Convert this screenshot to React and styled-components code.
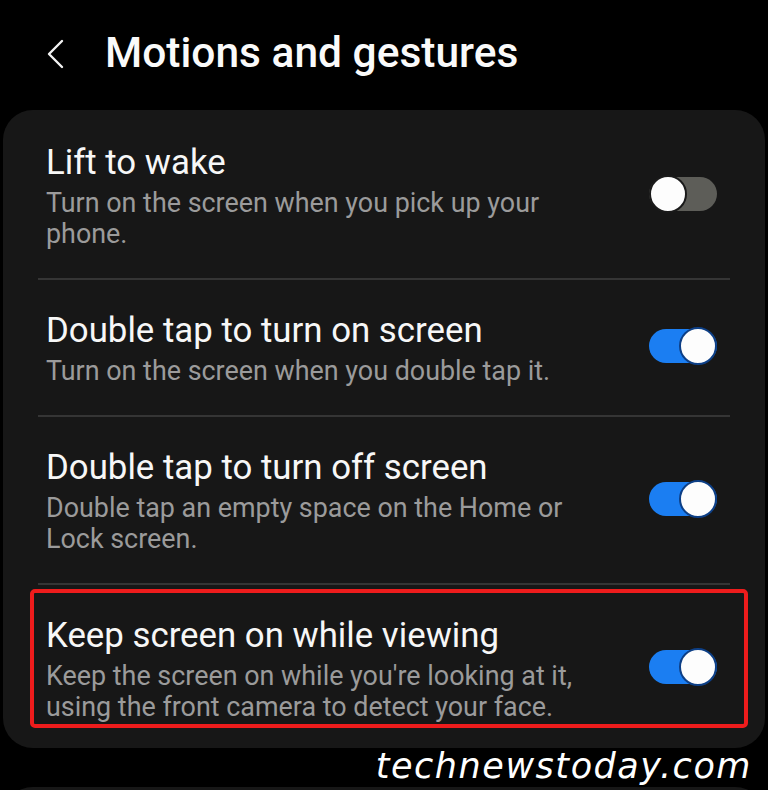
import React from "react";
import styled, { createGlobalStyle } from "styled-components";

const GlobalStyle = createGlobalStyle`
  html, body {
    margin: 0;
    padding: 0;
    background: #000;
  }
  * {
    box-sizing: border-box;
  }
`;

const settings = [
  {
    title: "Lift to wake",
    desc: ["Turn on the screen when you pick up your", "phone."],
    on: false,
  },
  {
    title: "Double tap to turn on screen",
    desc: ["Turn on the screen when you double tap it."],
    on: true,
  },
  {
    title: "Double tap to turn off screen",
    desc: ["Double tap an empty space on the Home or", "Lock screen."],
    on: true,
  },
  {
    title: "Keep screen on while viewing",
    desc: [
      "Keep the screen on while you're looking at it,",
      "using the front camera to detect your face.",
    ],
    on: true,
    highlight: true,
  },
];

const App = () => {
  return (
    <Screen>
      <GlobalStyle />
      <Header>
        <BackButton>
          <svg width="24" height="32" viewBox="0 0 24 32">
            <path
              d="M19 3 L6 16 L19 29"
              fill="none"
              stroke="#f2f2f2"
              strokeWidth="2.4"
              strokeLinecap="round"
              strokeLinejoin="round"
            />
          </svg>
        </BackButton>
        <Title>Motions and gestures</Title>
      </Header>

      <Card>
        {settings.map((s, i) => (
          <React.Fragment key={s.title}>
            {i > 0 && <Divider />}
            <Row last={i === settings.length - 1}>
              <Texts>
                <RowTitle>{s.title}</RowTitle>
                <RowDesc>
                  {s.desc.map((line) => (
                    <span key={line}>{line}</span>
                  ))}
                </RowDesc>
              </Texts>
              <Switch on={s.on}>
                <Thumb on={s.on} />
              </Switch>
              {s.highlight && <Highlight />}
            </Row>
          </React.Fragment>
        ))}
      </Card>

      <NextCard />
      <Watermark>technewstoday.com</Watermark>
    </Screen>
  );
};

export default App;

const Screen = styled.div`
  position: relative;
  width: 768px;
  height: 790px;
  overflow: hidden;
  background: #000;
  font-family: Roboto, "Noto Sans", sans-serif;
`;

const Header = styled.div`
  display: flex;
  align-items: flex-start;
  height: 110px;
  padding: 28px 0 0 43px;
`;

const BackButton = styled.div`
  width: 62px;
  padding-top: 10px;
  display: flex;
`;

const Title = styled.h1`
  margin: 0;
  font-size: 42.5px;
  line-height: 50px;
  font-weight: 500;
  color: #fafafa;
`;

const Card = styled.div`
  margin: 0 3px;
  padding: 2px 35px 0;
  background: #171717;
  border-radius: 30px;
`;

const Divider = styled.div`
  height: 2px;
  background: #353535;
`;

const Row = styled.div`
  position: relative;
  display: flex;
  align-items: center;
  justify-content: space-between;
  padding: ${({ last }) => (last ? "31px 13px 25px 8px" : "31px 13px 28px 8px")};
`;

const Texts = styled.div`
  display: flex;
  flex-direction: column;
  gap: 7px;
`;

const RowTitle = styled.div`
  font-size: 34.8px;
  line-height: 38px;
  color: #f7f7f7;
`;

const RowDesc = styled.div`
  display: flex;
  flex-direction: column;
  font-size: 26.9px;
  line-height: 31px;
  color: #9b9b9b;
`;

const Switch = styled.div`
  position: relative;
  flex-shrink: 0;
  width: 68px;
  height: 34px;
  margin-top: -6px;
  border-radius: 17px;
  background: ${({ on }) => (on ? "#1b7ef2" : "#5d5d58")};
`;

const Thumb = styled.div`
  position: absolute;
  top: -2px;
  left: ${({ on }) => (on ? "30px" : "0")};
  width: 38px;
  height: 38px;
  border-radius: 50%;
  background: #fdfdfd;
  border: 2px solid ${({ on }) => (on ? "#0d3f86" : "#1a1a1a")};
`;

const Highlight = styled.div`
  position: absolute;
  top: 4px;
  bottom: 20px;
  left: -8px;
  right: -18px;
  border: 4px solid #ee1c1c;
  border-radius: 5px;
  pointer-events: none;
`;

const NextCard = styled.div`
  margin: 39px 3px 0;
  height: 40px;
  background: #171717;
  border-radius: 30px 30px 0 0;
`;

const Watermark = styled.div`
  position: absolute;
  right: 16px;
  top: 746px;
  font-family: "DejaVu Sans", sans-serif;
  font-style: italic;
  font-size: 35px;
  line-height: 40px;
  letter-spacing: 1.55px;
  color: #fff;
  text-shadow: 0 0 3px #000, 0 0 3px #000;
`;
